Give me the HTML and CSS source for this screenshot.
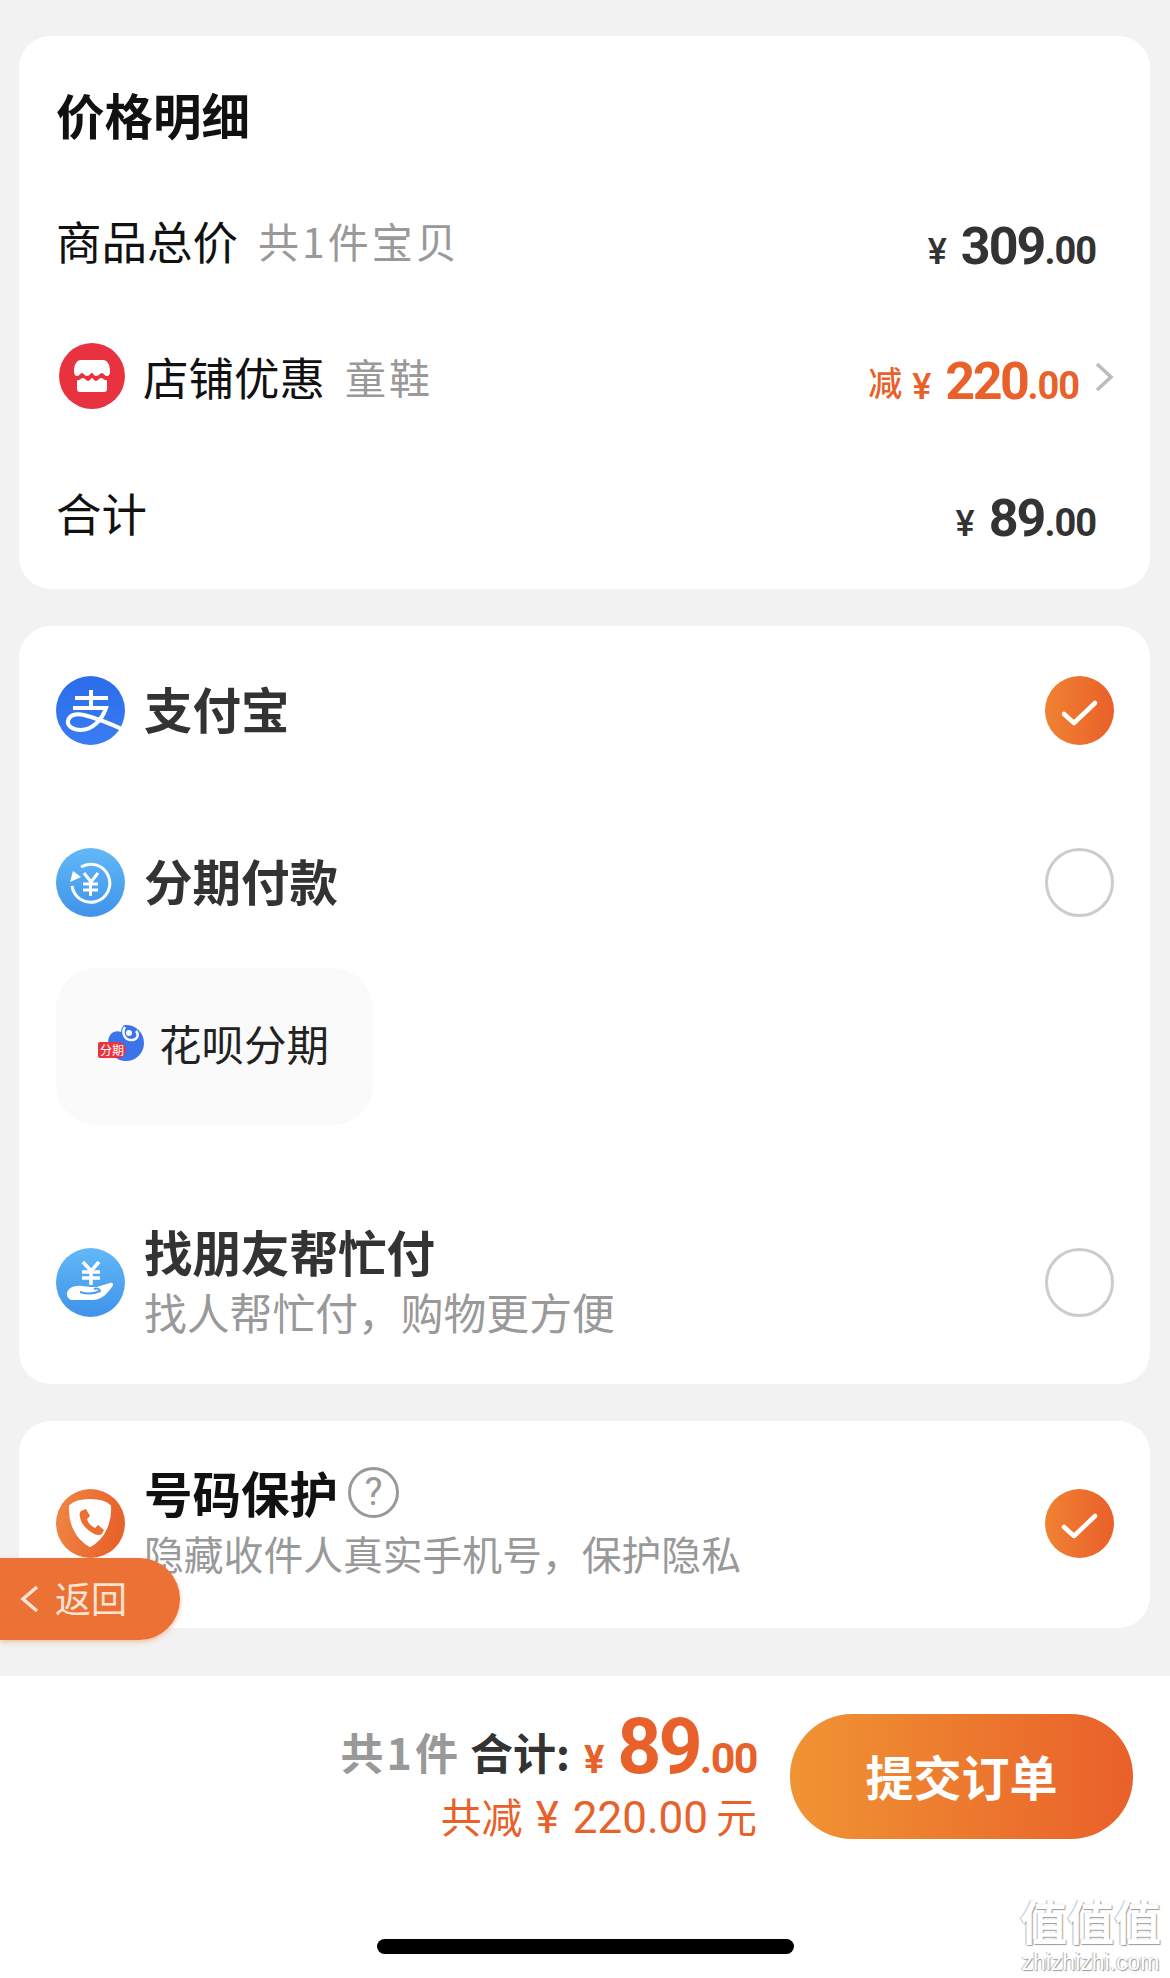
FILE: index.html
```html
<!DOCTYPE html>
<html lang="zh-CN">
<head>
  <meta charset="UTF-8">
  <meta name="viewport" content="width=device-width, initial-scale=1.0">
  <title>确认订单</title>
  <link rel="stylesheet" href="styles.css">
</head>
<body>
  <div class="page">
    <main class="content">

      <section class="card price-card">
        <h2 class="card-title">价格明细</h2>
        <div class="price-row">
          <div class="price-label"><span>商品总价</span><span class="price-note">共1件宝贝</span></div>
          <div class="price"><span class="yen">¥</span><span class="num">309</span><span class="dec">.00</span></div>
        </div>
        <div class="price-row">
          <div class="price-label">
            <svg class="shop-icon" viewBox="0 0 66 66">
              <circle cx="33" cy="33" r="33" fill="#e8323f"/>
              <path d="M22 17h22c5 0 7 6 7 11 0 3-1 5-3 5-3 0-3-3-5-3s-3 3-6 3-2-3-4-3-2 3-5 3-3-3-5-3-2 3-5 3c-2 0-3-2-3-5 0-5 2-11 7-11z" fill="#fff"/>
              <path d="M18 37c3 1 4-2 6-2s3 3 5 3 3-3 4-3 2 3 4 3 3-3 5-3 3 3 6 2v9c0 2-1 3-3 3H21c-2 0-3-1-3-3z" fill="#fff"/>
            </svg>
            <span>店铺优惠</span><span class="price-note">童鞋</span>
          </div>
          <div class="price price-off">
            <span class="off-word">减</span><span class="yen">¥</span><span class="num">220</span><span class="dec">.00</span>
            <svg class="chevron" viewBox="0 0 20 32"><path d="M3 3l14 13L3 29" fill="none" stroke="#bbb" stroke-width="3.5"/></svg>
          </div>
        </div>
        <div class="price-row">
          <div class="price-label"><span>合计</span></div>
          <div class="price"><span class="yen">¥</span><span class="num">89</span><span class="dec">.00</span></div>
        </div>
      </section>

      <section class="card pay-card">
        <div class="pay-row">
          <svg class="pay-icon" viewBox="0 0 69 69">
            <defs>
              <linearGradient id="blueA" x1="0" y1="0" x2="0" y2="1"><stop offset="0" stop-color="#2b6dea"/><stop offset="1" stop-color="#3a7cf2"/></linearGradient>
            </defs>
            <circle cx="34.5" cy="34.5" r="34.5" fill="url(#blueA)"/>
            <path d="M19 22h33M35 14v17M17 32h33C46 44 36 54 25 54 17 54 11 50 12 45 13 39 20 37 28 39 40 42 55 48 68 54" fill="none" stroke="#fff" stroke-width="4"/>
          </svg>
          <div class="pay-name pay-name-single">支付宝</div>
          <svg class="radio" viewBox="0 0 69 69"><use href="#checkMark"/></svg>
        </div>

        <div class="pay-row">
          <svg class="pay-icon" viewBox="0 0 69 69">
            <defs>
              <linearGradient id="blueB" x1="0" y1="0" x2="0" y2="1"><stop offset="0" stop-color="#62b8f6"/><stop offset="1" stop-color="#3f93ea"/></linearGradient>
            </defs>
            <circle cx="34.5" cy="34.5" r="34.5" fill="url(#blueB)"/>
            <path d="M25 19a19 19 0 1 1-9 19" fill="none" stroke="#fff" stroke-width="3"/>
            <path d="M14 34l3-11 8 6z" fill="#fff"/>
            <path d="M28 25l7 9 7-9M27 36h15M27 42h15M34.500 34v14" fill="none" stroke="#fff" stroke-width="3"/>
          </svg>
          <div class="pay-name pay-name-single">分期付款</div>
          <span class="radio radio-empty"></span>
        </div>

        <div class="plan-chip">
          <span class="plan-icon">
            <svg class="plan-blob" viewBox="0 0 36 38">
              <circle cx="18" cy="19" r="18" fill="#3b74ea"/>
              <path d="M0 0h17c-3 3-4 5-4 8-5-2-10 0-12 5H0z" fill="#fafafa"/>
              <path d="M17 3c-4 6 0 14 8 13 5-1 6-6 3-9" fill="none" stroke="#fafafa" stroke-width="2.500"/>
              <circle cx="21" cy="9" r="3" fill="#fafafa"/>
            </svg>
            <span class="plan-tag">分期</span>
          </span>
          <span class="plan-name">花呗分期</span>
        </div>

        <div class="pay-row">
          <svg class="pay-icon" viewBox="0 0 69 69">
            <defs>
              <linearGradient id="blueC" x1="0" y1="0" x2="0" y2="1"><stop offset="0" stop-color="#62b8f6"/><stop offset="1" stop-color="#3f93ea"/></linearGradient>
            </defs>
            <circle cx="34.5" cy="34.5" r="34.500" fill="url(#blueC)"/>
            <path d="M27 14l8 9 8-9M26 24h18M26 30h18M35 23v14" fill="none" stroke="#fff" stroke-width="3.500"/>
            <path d="M11 45c1-4 5-7 10-7 5-1 10 1 15 1 3 0 6 0 8-1l10-3c3-1 4 2 2 4-4 5-9 13-20 13H16c-3 0-6-4-5-7z" fill="#fff"/>
            <path d="M24 44c6 2 14 2 20-1 0-2-3-3-6-2" fill="none" stroke="#4aa0ee" stroke-width="2"/>
          </svg>
          <div class="pay-text pay-text-up">
            <div class="pay-name">找朋友帮忙付</div>
            <div class="pay-desc">找人帮忙付，购物更方便</div>
          </div>
          <span class="radio radio-empty"></span>
        </div>
      </section>

      <section class="card guard-card">
        <div class="pay-row guard-row">
          <svg class="pay-icon" viewBox="0 0 69 69">
            <defs>
              <linearGradient id="orangeA" x1="0" y1="0" x2="1" y2="0.2"><stop offset="0" stop-color="#ef8744"/><stop offset="1" stop-color="#e8622b"/></linearGradient>
            </defs>
            <circle cx="34.5" cy="34.5" r="34.5" fill="url(#orangeA)"/>
            <path d="M34 11c8 0 16 2 20 6 1 15-5 32-20 40C19 49 13 32 14 17c4-4 12-6 20-6z" fill="#fff" stroke="#fff" stroke-width="2" stroke-linejoin="round"/>
            <path d="M25 22l5-2 4 7-3 3c1 4 4 7 8 9l3-3 6 5-2 4c-3 2-7 1-11-2-6-4-10-9-11-15-1-3 0-5 1-6z" fill="#e96f33"/>
          </svg>
          <div class="pay-text">
            <div class="pay-name pay-name-dark"><span>号码保护</span><span class="help">?</span></div>
            <div class="pay-desc pay-desc-small">隐藏收件人真实手机号，保护隐私</div>
          </div>
          <svg class="radio" viewBox="0 0 69 69"><use href="#checkMark"/></svg>
        </div>
      </section>
    </main>

    <footer class="footer">
      <div class="summary">
        <div class="sum-top">
          <span class="sum-count">共1件</span>
          <span class="sum-label">合计:</span>
          <span class="sum-price"><span class="sum-yen">¥</span><span class="sum-num">89</span><span class="sum-dec">.00</span></span>
        </div>
        <div class="sum-off"><span>共减</span><span class="off-yen">¥</span><span class="off-num">220.00</span><span>元</span></div>
      </div>
      <button class="submit" type="button">提交订单</button>
    </footer>
    <div class="home-bar"></div>

    <a class="back-btn">
      <svg class="back-arrow" viewBox="0 0 19 28"><path d="M17 2L3 14l14 12" fill="none" stroke="#fde3d2" stroke-width="3.5"/></svg>
      <span class="back-text">返回</span>
    </a>

    <div class="watermark">
      <div class="wm-big">值值值</div>
      <div class="wm-small">zhizhizhi.com</div>
    </div>
  </div>

  <svg class="defs-only" width="0" height="0">
    <defs>
      <linearGradient id="orangeB" x1="0" y1="0" x2="1" y2="0"><stop offset="0" stop-color="#f08232"/><stop offset="1" stop-color="#e9602a"/></linearGradient>
      <g id="checkMark">
        <circle cx="34.5" cy="34.5" r="34.5" fill="url(#orangeB)"/>
        <path d="M19 38l10 9 21-20" fill="none" stroke="#fff" stroke-width="4.5" stroke-linecap="round" stroke-linejoin="round"/>
      </g>
    </defs>
  </svg>
</body>
</html>
```

FILE: styles.css
```css
* {
  box-sizing: border-box;
}

body {
  margin: 0;
  background-color: #f2f2f2;
  font-family: "Noto Sans CJK SC", "Noto Sans", sans-serif;
  color: #111;
}

.page {
  position: relative;
  width: 1170px;
  height: 1978px;
  display: flex;
  flex-direction: column;
  overflow: hidden;
}

.content {
  flex: 1;
  padding: 36px 20px 0 19px;
}

.card {
  background-color: #fff;
  border-radius: 32px;
}

/* price card */
.price-card {
  height: 553px;
  padding: 42px 36px 8px 37px;
}

.card-title {
  margin: 0 0 22px;
  font-size: 48.500px;
  line-height: 72px;
  font-weight: 700;
}

.price-row {
  height: 136px;
  display: flex;
  align-items: center;
  justify-content: space-between;
}

.price-label {
  display: flex;
  align-items: center;
  gap: 20px;
  font-size: 45.500px;
}

.price-note {
  color: #999;
  font-size: 41px;
  letter-spacing: 3px;
}

.shop-icon {
  width: 66px;
  height: 66px;
  margin-left: 3px;
  margin-right: -2px;
}

.price {
  display: flex;
  align-items: baseline;
  padding-right: 18px;
  padding-top: 13px;
  font-family: Roboto, sans-serif;
  font-weight: 700;
  color: #333;
}

.yen {
  font-size: 36px;
  font-weight: 500;
  margin-right: 14px;
}

.num {
  font-size: 52px;
  letter-spacing: -2px;
}

.dec {
  font-size: 38px;
  letter-spacing: -1px;
}

.price-off {
  color: #e8602a;
  padding-right: 0;
  padding-top: 10px;
}

.price-off .num {
  letter-spacing: -2.5px;
}

.off-word {
  font-family: "Noto Sans CJK SC", sans-serif;
  font-size: 34px;
  font-weight: 500;
  margin-right: 10px;
  transform: translateY(-3px);
}

.chevron {
  width: 20px;
  height: 32px;
  margin-left: 15px;
  align-self: flex-start;
  margin-top: 10px;
}

/* payment card */
.pay-card {
  height: 758px;
  margin-top: 37px;
  padding: 0 36px 0 37px;
}

.pay-row {
  height: 168px;
  margin-bottom: 4px;
  display: flex;
  align-items: center;
}

.pay-icon {
  width: 69px;
  height: 69px;
  flex: none;
  margin-right: 19px;
}

.pay-text {
  flex: 1;
}

.pay-text-up {
  padding-bottom: 5px;
}

.pay-name {
  flex: 1;
  font-size: 48.500px;
  line-height: 64px;
  font-weight: 700;
  color: #333;
  white-space: nowrap;
}

.pay-name-single {
  padding-bottom: 4px;
}

.pay-desc {
  margin-top: -2px;
  font-size: 42.800px;
  line-height: 60px;
  color: #999;
  white-space: nowrap;
}

.radio {
  width: 69px;
  height: 69px;
  flex: none;
}

.radio-empty {
  border: 3px solid #ccc;
  border-radius: 50%;
}

.plan-chip {
  width: 317px;
  height: 157px;
  margin-bottom: 73px;
  margin-top: -2px;
  padding: 0 0 8px 42px;
  display: flex;
  align-items: center;
  gap: 15px;
  background-color: #fafafa;
  border-radius: 40px;
  font-size: 42.500px;
  color: #222;
}

.plan-icon {
  position: relative;
  width: 46px;
  height: 38px;
}

.plan-blob {
  position: absolute;
  left: 10px;
  top: 0;
  width: 36px;
  height: 38px;
}

.plan-tag {
  position: absolute;
  left: 0;
  top: 18px;
  width: 28px;
  height: 16px;
  background-color: #e8343f;
  border-radius: 2px 8px 8px 2px;
  color: #fff;
  font-size: 12px;
  line-height: 16px;
  text-align: center;
  white-space: nowrap;
}

/* number protection card */
.guard-card {
  height: 207px;
  margin-top: 37px;
  padding: 0 36px 0 37px;
}

.guard-row {
  height: 205px;
  margin: 0;
}

.guard-row .pay-text {
  padding-bottom: 4px;
}

.pay-name-dark {
  color: #111;
  display: flex;
  align-items: center;
  gap: 10px;
}

.help {
  width: 51px;
  height: 51px;
  border: 3px solid #999;
  border-radius: 50%;
  color: #999;
  font-family: Roboto, sans-serif;
  font-size: 38px;
  font-weight: 400;
  line-height: 45px;
  text-align: center;
}

.pay-desc-small {
  margin-top: -1px;
  font-size: 39.800px;
}

/* bottom bar */
.footer {
  height: 302px;
  flex: none;
  background-color: #fff;
  padding: 38px 37px 0 0;
  display: flex;
  justify-content: flex-end;
  align-items: flex-start;
  gap: 33px;
}

.summary {
  margin-top: -12px;
  text-align: right;
}

.sum-top {
  display: flex;
  align-items: baseline;
  justify-content: flex-end;
  height: 70px;
  font-size: 43px;
  font-weight: 700;
}

.sum-count {
  color: #999;
  letter-spacing: 3px;
  margin-right: 9px;
  transform: translateY(-3px);
}

.sum-label {
  color: #333;
  margin-right: 14px;
  transform: translateY(-3px);
}

.sum-price {
  font-family: Roboto, sans-serif;
  font-weight: 700;
  color: #e8602a;
}

.sum-yen {
  font-size: 38px;
  margin-right: 13px;
}

.sum-num {
  font-size: 77px;
  letter-spacing: -3px;
}

.sum-dec {
  font-size: 43px;
  letter-spacing: -1.5px;
}

.sum-off {
  margin-top: 15px;
  display: flex;
  justify-content: flex-end;
  align-items: baseline;
  font-size: 41px;
  line-height: 56px;
  color: #e8602a;
}

.off-yen {
  margin: 0 14px 0 13px;
  font-family: Roboto, sans-serif;
  font-size: 44px;
}

.off-num {
  margin-right: 8px;
  font-family: Roboto, sans-serif;
  font-size: 44px;
}

.submit {
  width: 343px;
  height: 125px;
  padding-bottom: 5px;
  border: none;
  border-radius: 62px;
  background: linear-gradient(to right, #f09433, #e9602a);
  color: #fff;
  font-family: inherit;
  font-size: 48px;
  font-weight: 700;
}

.home-bar {
  position: absolute;
  left: 377px;
  top: 1939px;
  width: 417px;
  height: 15px;
  background-color: #000;
  border-radius: 8px;
}

/* overlays */
.back-btn {
  position: absolute;
  left: 0;
  top: 1558px;
  width: 180px;
  height: 82px;
  display: flex;
  align-items: center;
  gap: 16px;
  padding-left: 20px;
  background-color: #ec7135;
  border-radius: 0 41px 41px 0;
  box-shadow: 0 2px 5px rgba(236, 113, 53, 0.4);
  color: #fde3d2;
  font-size: 36px;
}

.back-text {
  padding-bottom: 5px;
}

.back-arrow {
  width: 19px;
  height: 28px;
}

.watermark {
  position: absolute;
  left: 1018px;
  top: 1892px;
  width: 145px;
  color: #fff;
  text-align: center;
  text-shadow: 1px 1px 1px #999, -1px 0 1px #bbb;
}

.wm-big {
  font-size: 47px;
  line-height: 56px;
  font-weight: 700;
  white-space: nowrap;
}

.wm-small {
  font-family: "Liberation Sans", sans-serif;
  font-size: 23px;
  line-height: 28px;
  white-space: nowrap;
}

.defs-only {
  position: absolute;
}
```
